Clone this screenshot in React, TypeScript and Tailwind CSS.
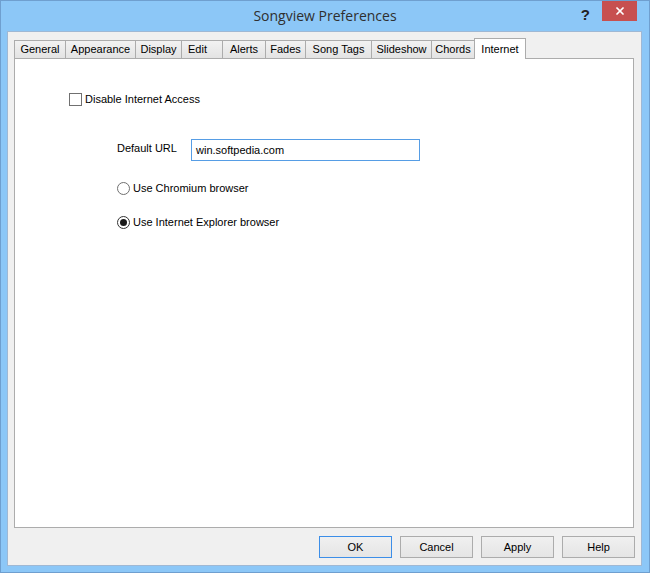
import { X } from 'lucide-react';

const tabs = [
  { label: 'General', w: 52 },
  { label: 'Appearance', w: 71 },
  { label: 'Display', w: 47 },
  { label: 'Edit', w: 42, left: true },
  { label: 'Alerts', w: 44 },
  { label: 'Fades', w: 41 },
  { label: 'Song Tags', w: 67 },
  { label: 'Slideshow', w: 61 },
  { label: 'Chords', w: 44 },
];

function Tab({ label, w, left }: { label: string; w: number; left?: boolean }) {
  return (
    <div
      style={{ width: w }}
      className={`h-[18px] -mr-px flex items-center border border-b-0 border-[#acacac] bg-gradient-to-b from-[#f2f2f2] to-[#e3e3e3] ${
        left ? 'justify-start pl-[6px]' : 'justify-center'
      }`}
    >
      {label}
    </div>
  );
}

function Button({ label, primary }: { label: string; primary?: boolean }) {
  return (
    <div
      className={`w-[73px] h-[22px] flex items-center justify-center border bg-gradient-to-b from-[#f0f0f0] to-[#e5e5e5] ${
        primary ? 'border-[#3c8ee8]' : 'border-[#acacac]'
      }`}
    >
      {label}
    </div>
  );
}

export default function App() {
  return (
    <div
      className="w-[650px] h-[573px] bg-[#8cc7f7] border border-[#6f9fcf] flex flex-col text-[11px] text-black"
      style={{ fontFamily: '"Liberation Sans", Arial, sans-serif' }}
    >
      {/* Title bar */}
      <div className="h-[30px] grid grid-cols-[1fr_auto_1fr]">
        <div />
        <div className="flex items-center pb-[1px] text-[14px] text-[#2f2f2f]" style={{ fontFamily: '"Open Sans", sans-serif' }}>
          Songview Preferences
        </div>
        <div className="flex items-start justify-end pr-[12px]">
          <span className="mt-[3px] mr-[12px] text-[15px] font-bold text-[#222]">?</span>
          <div className="w-[35px] h-[20px] bg-[#c75050] flex items-center justify-center">
            <X size={12} strokeWidth={3.5} className="text-white" />
          </div>
        </div>
      </div>

      {/* Client area */}
      <div className="ml-[6px] mr-[7px] h-[535px] border border-[#9fb8d4] bg-[#f0f0f0] flex flex-col">
        <div className="ml-[6px] mr-[7px] mt-[6px] flex items-end h-[20px]">
          {tabs.map(t => (
            <Tab key={t.label} {...t} />
          ))}
          <div className="relative z-10 w-[52px] h-[21px] -mb-px flex items-start justify-center pt-[2px] border border-b-0 border-[#acacac] bg-white">
            Internet
          </div>
        </div>

        {/* Panel */}
        <div className="ml-[6px] mr-[7px] h-[470px] border border-[#acacac] bg-white pl-[54px] pt-[33px] flex flex-col">
          <div className="flex items-center h-[14px]">
            <div className="w-[13px] h-[13px] border border-[#707070] bg-white" />
            <span className="ml-[3px]">Disable Internet Access</span>
          </div>

          <div className="ml-[48px] mt-[33px] flex items-center h-[22px]">
            <span className="w-[74px] -mt-[4px]">Default URL</span>
            <div className="w-[229px] h-[22px] border border-[#569de5] flex items-center pl-[4px]">
              win.softpedia.com
            </div>
          </div>

          <div className="ml-[48px] mt-[21px] flex items-center h-[13px]">
            <div className="w-[13px] h-[13px] rounded-full border border-[#707070] bg-white" />
            <span className="ml-[3px]">Use Chromium browser</span>
          </div>

          <div className="ml-[48px] mt-[21px] flex items-center h-[13px]">
            <div className="w-[13px] h-[13px] rounded-full border border-[#333] bg-white flex items-center justify-center">
              <div className="w-[7px] h-[7px] rounded-full bg-[#1a1a1a]" />
            </div>
            <span className="ml-[3px]">Use Internet Explorer browser</span>
          </div>
        </div>

        <div className="mt-[8px] mr-[6px] flex justify-end gap-[8px]">
          <Button label="OK" primary />
          <Button label="Cancel" />
          <Button label="Apply" />
          <Button label="Help" />
        </div>
      </div>
    </div>
  );
}
